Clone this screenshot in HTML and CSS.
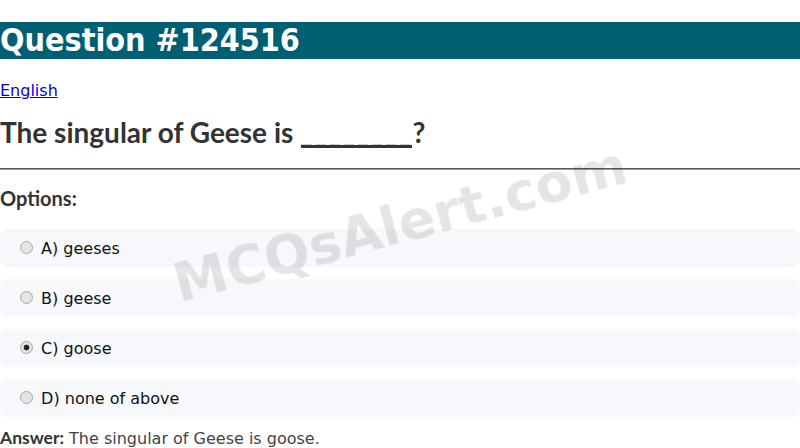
FILE: index.html
```html
<!DOCTYPE html>
<html>
<head>
<meta charset="utf-8">
<link rel="stylesheet" href="styles.css">
</head>
<body>
<h1 class="title">Question #124516</h1>
<p class="lang"><a href="#">English</a></p>
<h2 class="question">The singular of Geese is <span class="blank">________</span>?</h2>
<hr class="rule">
<h3 class="options-head">Options:</h3>
<div class="options">
  <label class="option"><input class="radio" type="radio" name="q" disabled> A) geeses</label>
  <label class="option"><input class="radio" type="radio" name="q" disabled> B) geese</label>
  <label class="option"><input class="radio" type="radio" name="q" disabled checked> C) goose</label>
  <label class="option"><input class="radio" type="radio" name="q" disabled> D) none of above</label>
</div>
<p class="answer"><strong class="answer-label">Answer:</strong> The singular of Geese is goose.</p>
<div class="watermark">MCQsAlert.com</div>
</body>
</html>
```

FILE: styles.css
```css
html, body {
  margin: 0;
  padding: 0;
  background: #fff;
}
body {
  font-family: "DejaVu Sans", sans-serif;
  font-size: 16px;
  color: #333;
  overflow: hidden;
}
.title {
  margin: 22px 0 0;
  background: #005f73;
  color: #fff;
  font-family: "DejaVu Sans Condensed", "DejaVu Sans", sans-serif;
  font-stretch: condensed;
  font-weight: bold;
  font-size: 32px;
  line-height: 37px;
}
.lang {
  margin: 22px 0 0;
  line-height: 19px;
}
.lang a {
  color: #0000ee;
}
.question {
  margin: 16px 0 0;
  font-family: Lato, sans-serif;
  font-weight: 700;
  font-size: 28px;
  line-height: 33px;
  color: #333;
}
.blank {
  letter-spacing: 1px;
  background: linear-gradient(#333, #333) no-repeat 1px calc(100% - 1px) / calc(100% - 2px) 3px;
}
.rule {
  margin: 19px 0 0;
  border: 0;
  border-top: 1px solid #5a5a5a;
  border-bottom: 1px solid #9a9a9a;
  height: 0;
}
.options-head {
  margin: 17px 0 0;
  font-family: Lato, sans-serif;
  font-weight: 700;
  font-size: 20px;
  line-height: 23px;
  color: #333;
}
.options {
  margin-top: 19px;
  display: flex;
  flex-direction: column;
  gap: 12px;
}
.option {
  display: flex;
  align-items: center;
  height: 38px;
  padding: 0 15px 0 20px;
  background: #f7f8fc;
  border-radius: 8px;
  color: #111;
  font-size: 16px;
  white-space: pre;
}
.radio {
  appearance: none;
  -webkit-appearance: none;
  box-sizing: border-box;
  width: 13px;
  height: 13px;
  margin: 0 3px 0 0;
  border: 1px solid #a8a8a8;
  border-radius: 50%;
  background: #e4e4e4;
  position: relative;
  top: -1px;
}
.radio:checked {
  background: radial-gradient(circle, #222 0 2.6px, #e4e4e4 3.2px);
}
.answer {
  margin: 11px 0 0;
  line-height: 19px;
  color: #444;
}
.answer-label {
  font-family: Lato, sans-serif;
  font-weight: 700;
  font-size: 17.5px;
  color: #333;
}
.watermark {
  position: fixed;
  left: 50%;
  top: 50%;
  transform: translate(-50%, -50%) rotate(-15deg);
  font-family: "DejaVu Sans", sans-serif;
  font-weight: bold;
  font-size: 54px;
  color: rgba(0, 0, 0, 0.1);
  white-space: nowrap;
  pointer-events: none;
}
```
